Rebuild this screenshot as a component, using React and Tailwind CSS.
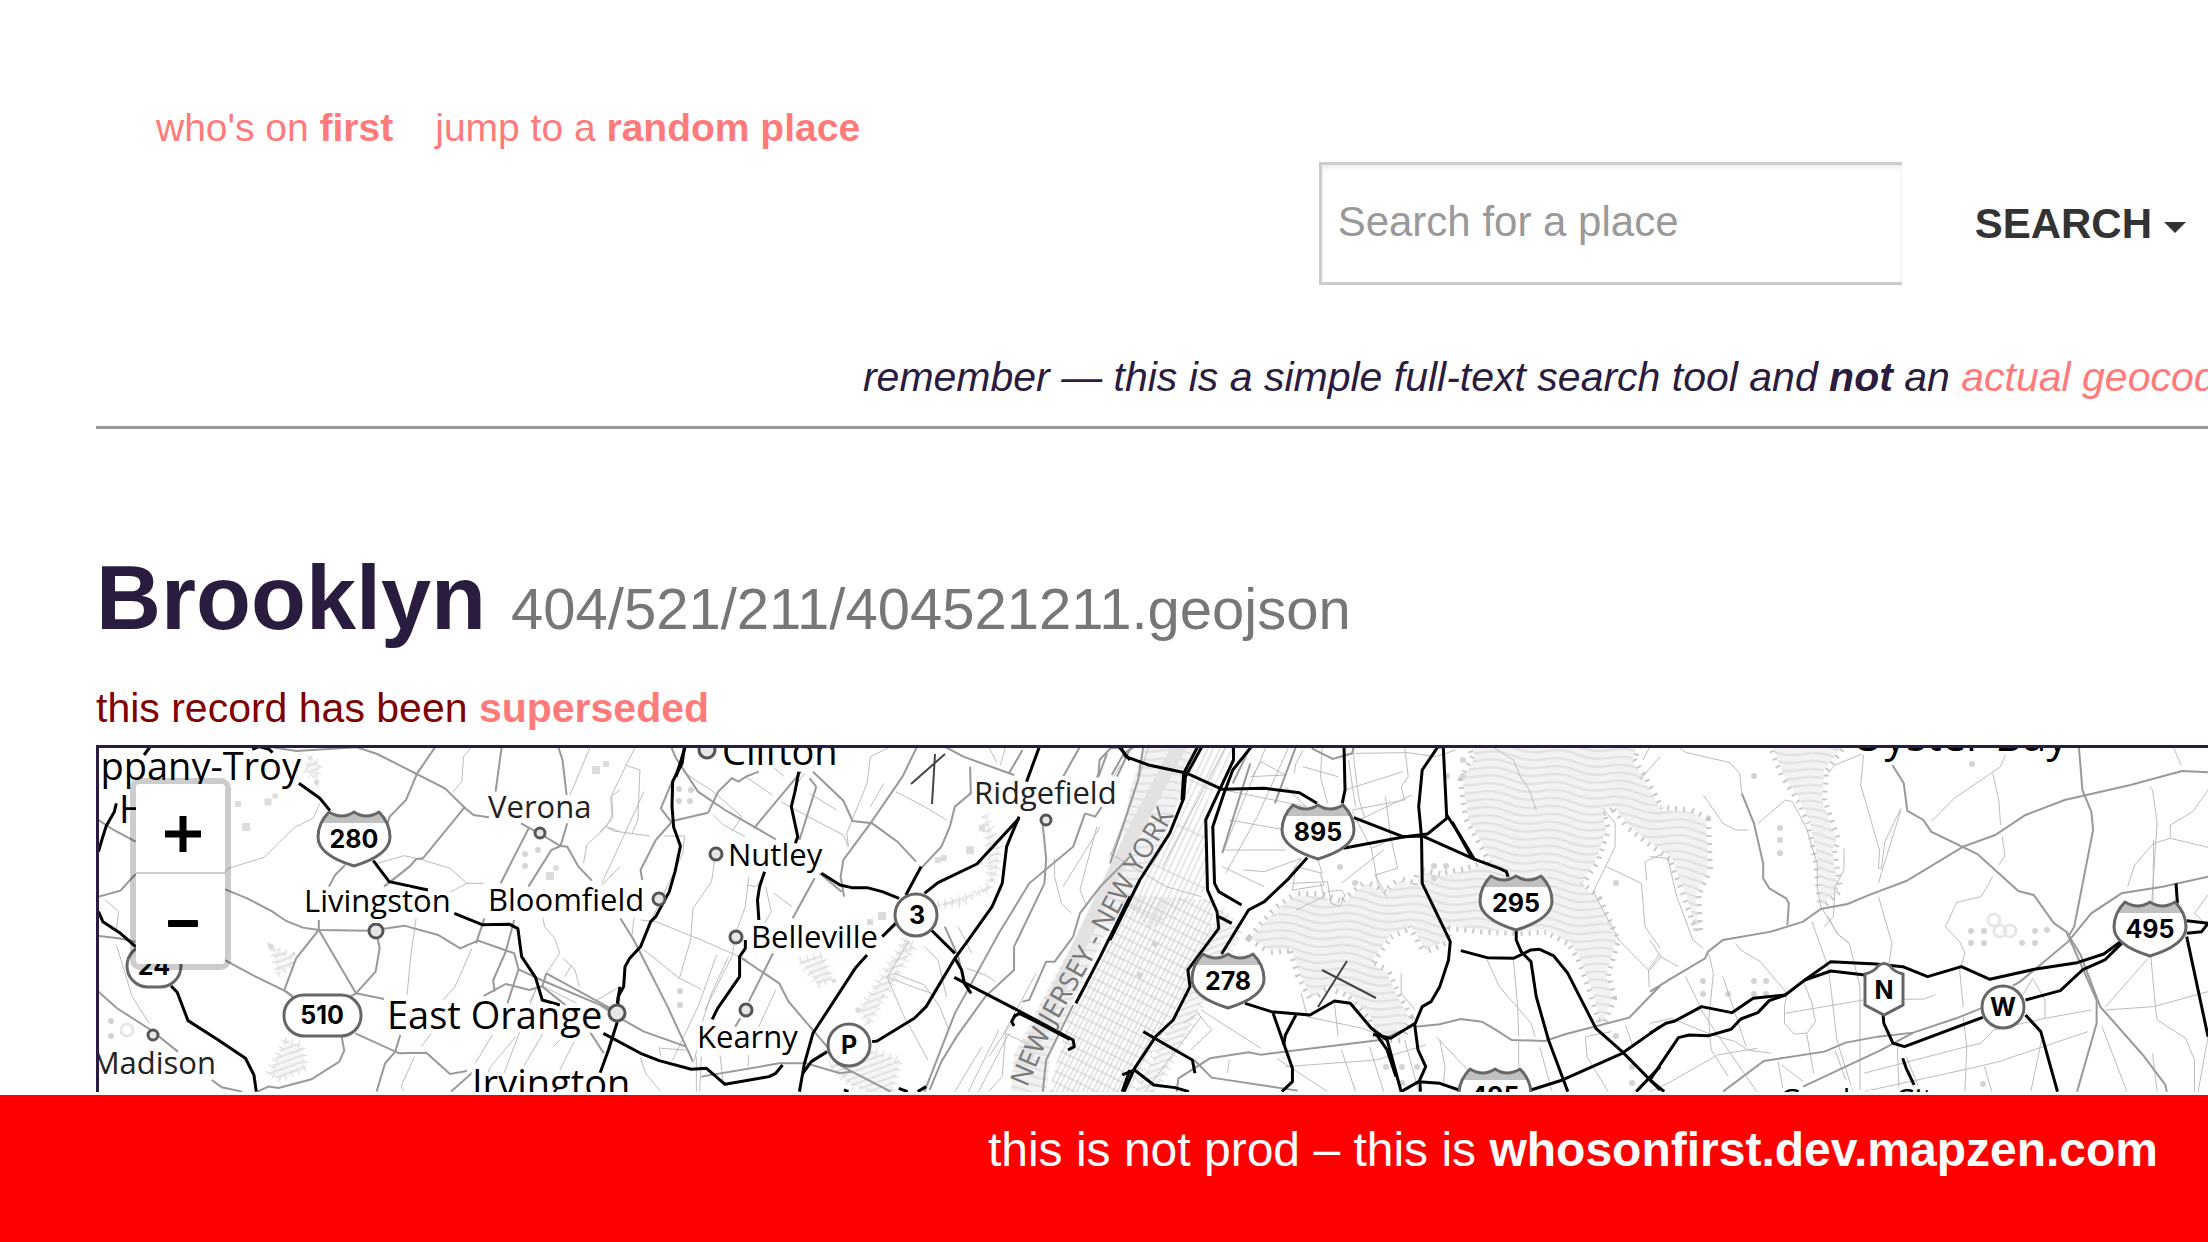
import React from "react";

const thin = "fill-none stroke-[#bcbcbc] [stroke-width:1]";
const mid = "fill-none stroke-[#999] [stroke-width:2]";
const major = "fill-none stroke-black [stroke-width:3] [stroke-linejoin:round]";

/* Road tiles: each one is traced on its own grid and placed on the map. */
const tiles = [
  {
    place: "translate(90 740) scale(0.338 0.3333)",
    thin: [
      "M1130 20L1105 50L1100 125L1075 155", "M1480 20L1435 130L1420 165", "M1568 150L1540 170L1545 225L1528 260L1470 315L1460 370",
      "M1528 260L1568 275", "M1568 380L1515 435", "M680 190L660 235L605 262L515 352L410 385L400 395", "M850 370L930 347L985 360L1065 385L1115 430L1165 430",
      "M1115 430L1065 457", "M45 480L85 515L78 570", "M78 615L125 770L175 850", "M965 535L950 640L938 765", "M1340 535L1345 560L1375 595L1390 640L1350 700",
      "M1130 625L1080 740L1045 780", "M1400 655L1435 690L1448 740", "M1425 675L1405 710", "M1320 750L1300 785", "M1190 885L1140 970", "M1010 880L980 920",
      "M960 950L920 1040L930 1055", "M1260 890L1185 980L1150 1055", "M1340 880L1280 985", "M1410 880L1370 920", "M1345 740L1400 770L1440 790", "M1440 890L1390 990",
      "M1568 740L1500 780", "M1320 745L1225 1000",
    ],
    mid: [
      "M540 22L610 33L790 22L850 42L1050 145L1110 205L1135 225L1180 232", "M1022 20L968 100L935 180L887 230L880 250", "M1110 200L985 355L965 357L945 380L870 440",
      "M1218 20L1200 155", "M1385 20L1398 60L1410 165", "M1275 250L1330 280L1392 318L1412 320L1445 380L1485 422", "M1298 265L1255 350L1215 430",
      "M1412 250L1392 318L1365 330L1297 440", "M25 240L70 270L135 305", "M25 470L90 452L135 402", "M25 588L85 595L135 605", "M25 755L80 805L180 870L260 935",
      "M360 1020L390 1042L450 1055", "M400 448L465 475L540 515L580 543L630 563L678 570L830 572L930 557L1030 585L1095 625L1148 602L1255 640L1268 688L1335 720L1568 820",
      "M677 540V570L610 655L575 750L600 770", "M677 570L787 760L845 695L857 625L850 590", "M395 658L480 705L575 752L600 770", "M787 760L870 777", "M770 770L787 760",
      "M755 375L725 405L707 440", "M785 880L915 940L995 938L1065 1002L1115 993", "M745 890L752 932L738 965L655 1018L558 1044L528 1040L495 1055",
      "M918 885L903 935L873 970L848 1055", "M1167 535L1142 610", "M1255 540L1230 635L1193 720L1197 755", "M1268 688L1235 790", "M1165 768L1230 732L1300 750L1340 738",
      "M1350 700L1540 805", "M1140 990L1068 1055", "M1350 700L1338 740L1450 830L1520 940",
    ],
    major: [
      "M178 20L160 45", "M540 38L530 28L500 20L480 28", "M78 190L72 215L48 258L35 300L25 335", "M618 130L680 175L710 212",
      "M838 362L885 425L1000 450", "M25 515L38 545L90 580L135 620", "M1078 520L1160 554L1242 553L1266 566L1277 650L1318 712L1338 780L1390 795",
      "M240 738L258 757L290 842L375 897L460 955L485 1005L492 1055", "M1568 740L1560 790",
    ],
  },
  {
    place: "translate(600 740) scale(0.338 0.3333)",
    thin: [
      "M105 20L75 80L35 165L38 235L0 275", "M75 75L118 90L112 240L95 280", "M20 262L40 273L148 288", "M190 288L250 288L245 340L150 545",
      "M130 155L40 355L5 430", "M245 95L335 155L420 230", "M335 225L365 255L430 290", "M345 320L330 425L275 505L268 600L235 715L300 748",
      "M420 230L390 275", "M430 110L510 165", "M500 70L545 110", "M535 185L625 235L720 285L735 320", "M605 100L570 150", "M700 210L620 160",
      "M440 410L430 500L405 570L390 650L310 810", "M490 400L460 440L435 435", "M490 440L507 515L480 560", "M515 460L568 500", "M100 535L95 585", "M120 540L165 545L300 600L435 660",
      "M130 630L180 670L235 715", "M345 645L315 730L290 800L215 960", "M380 650L330 760L300 855L280 960", "M520 750L465 870", "M860 20L800 50L790 130L730 280L735 320",
      "M840 130L800 200", "M875 155L960 200L1025 240", "M1025 770L1000 660L960 620", "M850 712L925 740L980 760", "M850 712L915 600", "M850 712L895 820L970 960",
      "M870 700L960 735L1005 800L1030 865", "M1085 685L1140 705L1170 725", "M1150 20L1175 70", "M1200 20L1185 75", "M1300 930L1200 880L1190 1010L1150 1055",
      "M1130 920L1050 1055", "M1180 870L1090 1055", "M1210 880L1120 1055", "M1250 800L1150 950", "M1345 355L1345 410L1365 490L1395 520", "M1480 260L1370 440",
      "M285 950V1055", "M300 950L295 1055", "M355 945L365 1030", "M440 945L438 980", "M120 955L135 1000L180 1055", "M1060 560L1100 640", "M180 925L255 930", "M175 920L180 950",
      "M1290 700L1195 880", "M1470 260L1420 450L1440 500",
    ],
    mid: [
      "M210 20L225 55L290 155L370 210L520 298", "M320 218L350 155L390 115L410 125L432 110L470 95", "M320 218L215 243L165 300L120 390L125 420", "M210 245L180 205L240 60",
      "M595 95L455 265", "M640 140L590 300", "M620 115L640 140", "M630 95L720 182L747 243L805 250L880 305L935 365", "M938 20L895 110L800 250L720 360L712 410L722 470",
      "M650 400L715 455", "M635 415L570 535", "M512 640L440 785", "M60 535L100 600L200 800L275 965", "M0 795L60 835L130 875L255 920", "M420 655L530 730L558 785L680 930",
      "M300 1010L530 970L610 970L710 1000L745 995L860 1055", "M415 835L400 860", "M1020 20L1075 50L1225 105", "M1095 80L1097 160L1050 200L1035 260L1010 320L945 390",
      "M1250 30L1210 100", "M1310 255L1320 355L1315 430L1225 620V690L1140 770L1055 890L1010 965L975 1050", "M1435 220L1400 320L1270 430L1180 580L1050 820L960 1055",
      "M1568 350L1480 440L1420 520L1400 590L1345 665L1320 665L1270 780L1250 785", "M1568 20L1510 25L1478 60L1475 100L1440 200", "M1500 40L1475 110", "M1420 20L1370 110",
      "M745 995L700 970", "M1400 795L1320 960L1310 1055", "M1020 560L1060 650L1075 720", "M1435 220L1465 230L1485 200",
    ],
    major: [
      "M250 20L243 70L215 125L213 200L218 262L238 318L222 395L205 455L165 530L150 545L120 620L88 655L74 680L70 740L54 770L50 850L25 930L0 1000", "M252 20L225 110",
      "M588 95L578 150L566 200L585 290L578 310", "M487 395L472 440L466 480L470 540", "M430 600V625L413 650V710L348 805L332 838",
      "M655 400L710 435L745 443H790L835 455L885 475", "M950 380L905 465", "M960 460L1000 428L1115 372L1240 235", "M1240 230L1215 290L1203 320L1190 430L1160 500L1090 600L1050 655L965 800L930 835L820 903L805 905",
      "M880 545L835 590", "M790 645L755 685L630 880L605 970L590 1055", "M672 935L625 965L600 1000", "M10 880L120 940L175 962L270 988L315 985L370 1033L500 1010L520 1000L540 975",
      "M980 570L1050 640", "M1050 655L1070 690L1078 730L1098 760", "M1048 712L1225 805L1400 900L1403 920L1385 930", "M1225 830L1240 820L1300 850L1390 898", "M1225 858L1218 845L1230 822",
      "M1300 20L1262 125", "M1568 470L1480 650L1408 790", "M1535 20L1568 60", "M1568 990L1545 1055", "M965 1040L940 1055", "M884 1045L910 1055", "M722 1050L735 1055",
    ],
  },
  {
    place: "translate(1110 740) scale(0.3508 0.3333)",
    thin: [
      "M30 75L0 130", "M110 20L60 190L0 350", "M330 20L150 380", "M445 20L385 170L325 330", "M510 20L420 230L330 400", "M550 30L530 70L525 100", "M405 110L430 65L500 105L400 110",
      "M325 150L560 200L500 140", "M340 240L500 270", "M320 330L500 330", "M380 390L440 395L545 355L490 440", "M320 380L440 440", "M590 350L605 400L530 380L520 450L610 435L600 400",
      "M520 430L620 425L630 490L655 500L670 465L660 450L620 455", "M605 20L600 110L620 190", "M695 25V60L710 180L725 230", "M840 20L850 110L830 140L840 180L690 210", "M670 150L835 95",
      "M700 40L850 38L930 50L985 30", "M680 60L700 200", "M785 170L800 290L820 385L755 405L780 450", "M690 215L745 325L765 440L790 470", "M745 325L780 310", "M690 250L860 165",
      "M660 430L780 330", "M1090 20L1150 60L1170 110L1195 150L1215 210", "M1568 50L1510 120", "M1405 205L1440 250L1440 320L1378 455L1450 600L1535 690L1537 740", "M1415 380L1515 430L1525 560L1568 625",
      "M1568 345L1525 365L1530 420", "M1535 690L1568 640", "M1075 660L1110 740L1200 850L1212 890", "M1150 660L1162 800L1165 890", "M640 790L650 890", "M545 760L560 820", "M560 830L720 865L755 880",
      "M830 700V760L870 810", "M500 980L760 960L900 915", "M660 930L700 1055", "M740 920L780 1055", "M475 955L620 1055", "M840 900L880 1055", "M930 890L1020 990", "M940 900L955 980L950 1040",
      "M1165 905V980", "M1225 920L1260 1055", "M1355 890L1360 950L1420 1055", "M1355 890L1430 875", "M1470 855L1490 920", "M260 810L430 925", "M210 850L250 820L290 870L230 930",
      "M340 960L335 1000", "M260 830L100 1055", "M530 510L610 470L600 430", "M0 340L160 440L260 470", "M550 80L650 110",
    ],
    mid: [
      "M95 20L80 120L30 280L0 370", "M60 20L20 110", "M400 70L370 170L320 340", "M530 20L470 190", "M400 20L350 130", "M575 25L635 57L690 40L695 20", "M870 860L940 853L1000 837L1060 845L1100 870L1145 900L1240 903L1300 882L1480 833L1520 790L1568 738",
      "M190 1055L195 1015L285 955L395 937L430 944L770 900L860 860", "M240 960L290 1013L535 1052", "M5 105L40 40L70 20",
    ],
    major: [
      "M0 600L85 420L170 280L210 175L215 110L262 20", "M205 180L210 100L250 20", "M30 20L45 50L110 75L220 100L320 148L440 145L540 158L590 190", "M352 20V60L330 110L273 240L278 450L305 515L310 565L222 690L228 740L180 840L130 890L70 985L40 1055",
      "M403 20L350 90L325 160L293 260L298 430L310 455L375 495", "M667 20L670 150L662 190", "M695 233L835 290L890 288L1040 358L1110 385L1130 395L1135 410", "M665 325L840 290L905 282L960 235L950 20L935 20L890 90L880 200L888 290L890 430L970 605L965 660L940 740L915 785L890 800L870 850L800 895L750 883",
      "M960 225L1000 290L1040 360", "M975 245L1030 350", "M562 353L510 415L440 485L395 510L318 642", "M310 530L347 550", "M385 790L460 815L570 825L640 783L685 790L745 865L790 900L830 1055", "M760 885L790 930L815 1010", "M465 820L495 910L520 985V1025L490 1055", "M530 825L500 885L495 915",
      "M868 850L878 930L900 980L883 1020L885 1055", "M830 1055L880 1025L940 1030L995 1050", "M1158 570V600L1172 635L1200 665L1215 770L1250 900L1305 1055", "M1000 632L1075 653L1150 655L1200 630L1225 628L1265 648L1305 700L1385 865L1460 935L1568 1050", "M1200 1050L1290 1020L1460 940L1568 860", "M1568 980L1500 1055",
      "M95 875L185 930L235 960L242 1000", "M35 1005L70 990L125 1035L185 1043L225 1055",
    ],
  },
  {
    place: "translate(1650 740) scale(0.3559 0.3333)",
    thin: [
      "M80 20L100 37L225 68L252 100L258 160", "M305 250L380 180L400 185L440 265L455 320L470 370L470 440L480 500L530 585L560 610L590 740V1055", "M600 45L592 135L645 330L642 385L650 385L660 305L705 205", "M705 210L650 400L642 430",
      "M642 470L680 610L672 670", "M600 40L520 75L500 100", "M545 325V390L520 440L515 530L490 560", "M1000 40L985 80L855 175L790 245", "M963 100L980 180L985 255", "M990 290L997 350L980 375", "M963 410L930 470L862 487L830 560L870 605L885 640L870 690L880 800",
      "M1470 20L1492 75", "M1405 140L1412 150L1425 250L1410 480", "M1568 150L1525 215L1462 255V295L1568 322", "M1462 295L1415 310L1362 375L1342 440", "M0 350L50 355L75 470L100 540L120 600L150 625", "M0 600L30 650L80 680", "M30 650L0 690",
      "M165 640L178 700L165 840L172 930L220 1010", "M240 610L255 630L310 665L385 760L378 800V850L405 882L440 880L465 845L455 790L430 720", "M380 820L600 780L770 777L800 765", "M455 545L500 680L510 760L525 900L570 1055", "M500 530L525 580L560 610", "M100 710L150 820L200 900L300 1055", "M205 710L270 920",
      "M0 850L60 835L175 885L240 905L275 930L340 940", "M0 1055L50 1030L190 945L300 925", "M360 965L375 1055", "M370 975L430 1025", "M440 880L460 1000", "M520 930L550 1020", "M600 1000L890 920L930 910L965 870L1110 835V780L1075 715L1045 770", "M600 1055L880 990L980 965L1230 875",
      "M695 920L700 1055", "M720 950L760 1055", "M880 830L890 920L885 1055", "M940 980L960 1055", "M1110 835L1240 810", "M1270 860L1340 1055", "M1280 810L1415 800L1568 755", "M1415 300L1412 640L1280 800", "M1420 800L1425 840L1505 895L1530 960V1055", "M1412 940L1425 1055", "M1568 890L1540 1055",
      "M1407 645L1420 800", "M1568 465L1530 520L1568 560", "M1100 900L1070 1055", "M0 20L-20 60", "M150 165L205 250L240 270L275 270",
    ],
    mid: [
      "M258 160L292 250L318 370V415L335 445L382 475L390 490L386 555", "M0 755L60 715L155 655L163 635L205 600L340 575L430 545L480 507L555 492L620 463L720 423L880 320L970 285L1055 225L1165 180L1350 135L1495 93L1568 97", "M678 70L713 130L723 213L768 240L790 275L920 342L1035 453L1078 465L1135 550L1170 575L1210 645L1265 800L1385 945L1448 1035L1452 1055",
      "M1205 20L1215 150L1240 215L1245 270L1192 560L1175 590", "M1568 410L1440 440L1325 460L1240 520L1175 605L1040 725L1020 737", "M205 1055L320 963L490 935L550 908L640 890L740 878L860 835L930 805", "M740 878L650 930L430 1040", "M1170 575L1255 780V850L1200 1055",
    ],
    major: [
      "M0 880L45 850L70 843L145 800L230 818L290 775L380 765L435 720L508 665L635 672L710 680L780 710L875 680L955 718L1080 688L1200 668L1275 642L1325 603", "M0 1020L25 980L80 893L110 885L165 887L228 868L255 837L303 818L335 782L380 765", "M435 720L508 693L610 706", "M1325 610L1278 660L1215 690L1153 752L1055 780",
      "M655 825L657 850L683 910L715 920L935 832", "M710 955L720 985L742 1035", "M1055 825L1098 875L1145 1055", "M1478 430L1482 490", "M1508 590L1568 890", "M1508 542L1568 550L1550 575L1508 580", "M0 1020L40 1055",
    ],
  },
];

const coast = [
  "M1467 735L1475 757L1463 780L1468 818L1492 862L1466 871L1440 876L1420 872L1417 886L1400 881L1385 894L1366 884L1342 904L1321 896L1296 896L1276 910L1260 928L1252 938L1270 950L1292 948L1300 975L1312 997L1328 985L1350 994L1372 1018L1378 1038L1401 1038L1409 1018L1398 998L1387 973L1370 963L1390 935L1412 925L1425 950L1447 940L1445 925L1485 930L1520 931L1546 930L1570 942L1580 958L1590 985L1602 1024L1612 998L1606 975L1616 940L1604 914L1598 900L1580 884L1596 860L1606 830L1602 812L1614 806L1628 825L1650 842L1672 858L1684 890L1698 930L1696 895L1708 870L1706 820L1690 812L1660 810L1650 790L1632 760L1640 735Z",
  "M1768 735L1784 775L1800 800L1810 822L1818 860L1822 905L1838 890L1832 850L1836 840L1822 800L1824 770L1850 735Z",
];
const river = "M1148 735L1130 790L1122 840L1080 930L1050 985L1014 1055L1010 1100L1046 1100L1050 1050L1078 990L1105 935L1160 850L1182 790L1200 735Z";
const smallWater = [
  "M985 815L1000 850L995 880L960 905L935 905L990 890Z", "M905 940L860 1010L868 1025L915 945Z", "M1222 910L1240 930L1180 1045L1150 1100L1130 1100L1185 1000Z",
  "M830 1065L870 1050L900 1060L890 1100L850 1085Z", "M800 960L822 955L832 980L818 985Z",
];
const parks = [
  [238, 804, 6], [246, 827, 8], [268, 802, 7], [275, 796, 5], [596, 770, 8], [606, 764, 6], [550, 876, 8], [556, 868, 5], [944, 858, 6], [970, 850, 8], [938, 860, 6], [980, 862, 5], [882, 916, 8], [870, 922, 6], [858, 1010, 5], [982, 828, 6],
];
const trees = [
  [679, 789], [691, 790], [679, 801], [690, 801], [680, 991], [680, 1005], [111, 1021], [111, 1036], [525, 854], [538, 850], [525, 866], [1463, 760], [1447, 776], [1463, 776], [1434, 866], [1446, 866], [1434, 878], [1355, 883], [1340, 867], [1155, 944], [1140, 975],
  [1780, 828], [1780, 840], [1780, 853], [1972, 764], [1754, 776], [1703, 981], [1703, 994], [1754, 981], [1766, 981], [1728, 994], [1754, 994], [1766, 994], [1971, 931], [1984, 931], [1971, 943], [1984, 943], [2022, 943], [2035, 943], [2035, 931], [2047, 930],
  [1386, 1067], [1402, 1067], [1417, 1067], [1402, 1083], [1616, 883], [1616, 1036], [1632, 1067], [1632, 1083], [1983, 1084],
];
const hatched = [
  "M272 948L292 955L294 965L278 975Z", "M285 1040L302 1045L306 1068L280 1080L268 1074Z", "M310 757L320 765L316 780L305 770Z",
];

const towns = [
  ["Parsippany-Troy", 301, 780, "large", "end"], ["Hills", 119, 823, "large"], ["East Orange", 387, 1029, "large"], ["Irvington", 472, 1097, "large"], ["Clifton", 722, 765, "large"],
  ["Oyster Bay", 2068, 751, "city", "end"], ["Verona", 488, 818, "soft"], ["Livingston", 304, 912, "small"], ["Bloomfield", 488, 911, "small"], ["Madison", 216, 1074, "soft", "end"],
  ["Ridgefield", 974, 804, "soft"], ["Nutley", 728, 866, "small"], ["Belleville", 751, 948, "small"], ["Kearny", 697, 1048, "small"], ["Garden City", 1779, 1111, "small"],
];
const townStyle = {
  city: "fill-black text-[43px]",
  large: "fill-black text-[38px]",
  small: "fill-black text-[31px]",
  soft: "fill-[#222] text-[31px]",
};
const dots = [
  [540, 833, 5], [376, 931, 7], [153, 1035, 5], [617, 1013, 8], [659, 899, 6], [707, 750, 8], [716, 854, 6], [736, 937, 6], [746, 1010, 6], [1046, 820, 5],
];
const interstates = [["280", 354, 811], ["895", 1318, 804], ["295", 1516, 875], ["278", 1228, 953], ["495", 1495, 1068], ["495", 2150, 901]];
const shieldText = "fill-black text-[25px] font-bold [font-family:Inter,sans-serif]";

function Interstate({ label, x, y }) {
  return (
    <g transform={`translate(${x} ${y})`}>
      <path d="M-25 1Q-12 9 0 1Q12 9 25 1Q36 12 36 26Q36 44 0 55Q-36 44 -36 26Q-36 12 -25 1Z" fill="#fff" />
      <path d="M-25 1Q-12 9 0 1Q12 9 25 1Q30 5 33 12H-33Q-30 5 -25 1Z" fill="#c0c0c0" />
      <path d="M-25 1Q-12 9 0 1Q12 9 25 1Q36 12 36 26Q36 44 0 55Q-36 44 -36 26Q-36 12 -25 1Z" fill="none" stroke="#666" strokeWidth="3" strokeLinejoin="round" />
      <text x="0" y="37" textAnchor="middle" className={shieldText}>{label}</text>
    </g>
  );
}

function Lines({ list, className }) {
  return list.map((d) => <path key={d} d={d} className={className} vectorEffect="non-scaling-stroke" />);
}

function TownMap() {
  return (
    <svg className="absolute inset-0 h-full w-full" role="img" aria-label="Map of the New York area">
      <defs>
        <pattern id="waves" width="64" height="8" patternUnits="userSpaceOnUse" patternTransform="rotate(6)">
          <rect width="64" height="8" fill="#f2f2f2" />
          <path d="M0 -4C16 -4 16 -9 32 -9S48 -4 64 -4M0 4C16 4 16 -1 32 -1S48 4 64 4M0 12C16 12 16 7 32 7S48 12 64 12" fill="none" stroke="#e0e0e0" strokeWidth="2" />
        </pattern>
        <pattern id="hatch" width="6" height="6" patternUnits="userSpaceOnUse" patternTransform="rotate(-20)">
          <rect width="6" height="6" fill="#f6f6f6" />
          <path d="M0 3H6" stroke="#e2e2e2" strokeWidth="2" />
        </pattern>
        <pattern id="avenues" width="9" height="10" patternUnits="userSpaceOnUse" patternTransform="rotate(27)">
          <path d="M2 0V10M6 0V10M0 5H9" stroke="#cacaca" strokeWidth="1" fill="none" />
        </pattern>
        <pattern id="uptown" width="11" height="46" patternUnits="userSpaceOnUse" patternTransform="rotate(25)">
          <path d="M3 0V46M8 0V46M0 20H11" stroke="#cdcdcd" strokeWidth="1" fill="none" />
        </pattern>
        <path id="border" d="M1027 1088L1052 1030L1108 932L1134 884Q1150 854 1190 790" />
      </defs>
      <g transform="translate(-99 -748)">
        <g fill="url(#waves)" stroke="#c8c8c8" strokeWidth="10" strokeDasharray="2 6">
          {coast.map((d) => <path key={d} d={d} />)}
        </g>
        <g fill="url(#waves)">
          {coast.map((d) => <path key={d} d={d} />)}
          <path d={river} />
        </g>
        <g fill="url(#hatch)" stroke="#dadada" strokeWidth="7" strokeDasharray="1 6">
          {smallWater.map((d) => <path key={d} d={d} />)}
          {hatched.map((d) => <path key={d} d={d} />)}
        </g>
        <path d="M1185 735L1130 840L1020 1070" fill="none" stroke="#e2e2e2" strokeWidth="14" />
        <path d="M1200 735H1240L1208 800L1205 890L1150 930L1125 900L1180 820Z" fill="url(#uptown)" />
        <path d="M1125 895L1215 900L1210 935L1188 985L1130 1095H1048L1068 1020L1085 985Z" fill="url(#avenues)" />
        <g fill="#dcdcdc">
          {parks.map(([x, y, s]) => <rect key={`${x}-${y}`} x={x - s / 2} y={y - s / 2} width={s} height={s} />)}
        </g>
        <g fill="#d4d4d4">
          {trees.map(([x, y]) => <circle key={`${x}-${y}`} cx={x} cy={y} r="3" />)}
        </g>
        <g fill="none" stroke="#e6e6e6" strokeWidth="3">
          <circle cx="1994" cy="920" r="6" /><circle cx="2000" cy="931" r="6" /><circle cx="2010" cy="931" r="6" /><circle cx="127" cy="1030" r="6" />
        </g>
        {tiles.map((t) => <g key={t.place} transform={t.place}><Lines list={t.thin} className={thin} /></g>)}
        {tiles.map((t) => <g key={t.place} transform={t.place}><Lines list={t.mid} className={mid} /></g>)}
        {tiles.map((t) => <g key={t.place} transform={t.place}><Lines list={t.major} className={major} /></g>)}
        <path d="M935 754L932 804M945 754L911 784M1322 970L1376 998M1347 961L1318 1007" stroke="#444" strokeWidth="2" />
        <text className="fill-[#777] text-[27px] [font-family:'Open_Sans',sans-serif]"><textPath href="#border">NEW JERSEY - NEW YORK</textPath></text>
        <g fill="#e6e6e6" stroke="#555" strokeWidth="3">
          {dots.map(([x, y, r]) => <circle key={`${x}-${y}`} cx={x} cy={y} r={r} />)}
        </g>
        <g stroke="#fff" strokeWidth="8" strokeLinejoin="round" paintOrder="stroke" className="[font-family:'Open_Sans',sans-serif]">
          {towns.map(([name, x, y, kind, anchor]) => (
            <text key={name} x={x} y={y} textAnchor={anchor || "start"} className={townStyle[kind]}>{name}</text>
          ))}
        </g>
        {interstates.map(([label, x, y]) => <Interstate key={`${label}-${x}`} label={label} x={x} y={y} />)}
        <g fill="#fff" stroke="#666" strokeWidth="3">
          <rect x="127" y="945" width="54" height="42" rx="21" />
          <rect x="284" y="995" width="77" height="41" rx="20" />
          <circle cx="916" cy="915" r="21" />
          <circle cx="849" cy="1045" r="21" />
          <circle cx="2003" cy="1007" r="21" />
          <path d="M1865 974Q1874 972 1878 966Q1884 961 1890 966Q1894 972 1903 974V1005L1884 1015L1865 1005Z" />
        </g>
        <g textAnchor="middle" className={shieldText}>
          <text x="154" y="975">24</text>
          <text x="322" y="1024">510</text>
          <text x="917" y="924">3</text>
          <text x="849" y="1054">P</text>
          <text x="2003" y="1016">W</text>
          <text x="1884" y="999">N</text>
        </g>
      </g>
    </svg>
  );
}

export default function App() {
  const link = "text-[#ff7b7b]";
  return (
    <div className="flex h-screen flex-col overflow-hidden bg-white text-[41px] text-[#2a1c3f] [font-family:'Liberation_Sans',Arial,sans-serif]">
      <div className="flex min-h-0 flex-1 flex-col pl-24">
        <header className="border-b-3 border-[#999] pt-[104px]">
          <nav className="flex gap-[42px] pl-[60px] text-[39px] leading-[48px]">
            <a href="#home" className={link}>who's on <strong>first</strong></a>
            <a href="#random" className={link}>jump to a <strong>random place</strong></a>
          </nav>
          <form className="mt-[10px] flex items-center justify-end pr-[22px] text-[42px]" onSubmit={(e) => e.preventDefault()}>
            <input
              type="text"
              aria-label="Search for a place"
              placeholder="Search for a place"
              className="h-[123px] w-[583px] border-3 border-r-0 border-[#ccc] bg-white px-4 pb-1 shadow-[inset_0_3px_4px_rgba(0,0,0,0.08)] outline-none placeholder:text-[#999]"
            />
            <button type="button" className="ml-[73px] flex items-center gap-3 font-bold text-[#333]">
              SEARCH
              <svg width="22" height="11" viewBox="0 0 22 11" className="mt-2" aria-hidden="true"><path d="M0 0H22L11 11Z" fill="#333" /></svg>
            </button>
          </form>
          <p className="-mr-[45px] mt-[68px] whitespace-nowrap pb-[25px] text-right italic leading-[48px]">
            remember — this is a simple full-text search tool and <strong>not</strong> an <a href="#geocoder" className={link}>actual geocoder</a>
          </p>
        </header>
        <main className="flex min-h-0 flex-1 flex-col">
          <h1 className="mt-[119px] whitespace-nowrap text-[90px] font-bold leading-[100px]">
            Brooklyn <small className="text-[58px] font-normal text-[#777]">404/521/211/404521211.geojson</small>
          </h1>
          <p className="mt-[25px] leading-[48px] text-[#800000]">
            this record has been <a href="#superseded" className={`${link} font-bold`}>superseded</a>
          </p>
          <section className="relative mt-[13px] min-h-0 flex-1 overflow-hidden border-l-3 border-t-3 border-[#2a1c3f] bg-white">
            <TownMap />
            <div className="absolute left-[31px] top-[30px] flex w-[101px] flex-col rounded-[10px] border-6 border-black/20 bg-clip-padding">
              <button type="button" aria-label="Zoom in" className="flex h-[90px] items-center justify-center rounded-t-[4px] border-b-2 border-[#ccc] bg-white pt-3 pl-1">
                <svg width="38" height="38" viewBox="0 0 38 38" stroke="#000" strokeWidth="7" aria-hidden="true"><path d="M1 19H37M19 1V37" /></svg>
              </button>
              <button type="button" aria-label="Zoom out" className="flex h-[90px] items-center justify-center rounded-b-[4px] bg-white pt-2 pl-1">
                <svg width="30" height="7" viewBox="0 0 30 7" aria-hidden="true"><rect width="30" height="7" rx="1" /></svg>
              </button>
            </div>
          </section>
        </main>
      </div>
      <footer className="h-[150px] border-t-3 border-white bg-[#f00] pr-[50px] pt-[27px] text-right text-[48px] leading-[56px] text-white">
        this is not prod – this is <strong>whosonfirst.dev.mapzen.com</strong>
      </footer>
    </div>
  );
}
